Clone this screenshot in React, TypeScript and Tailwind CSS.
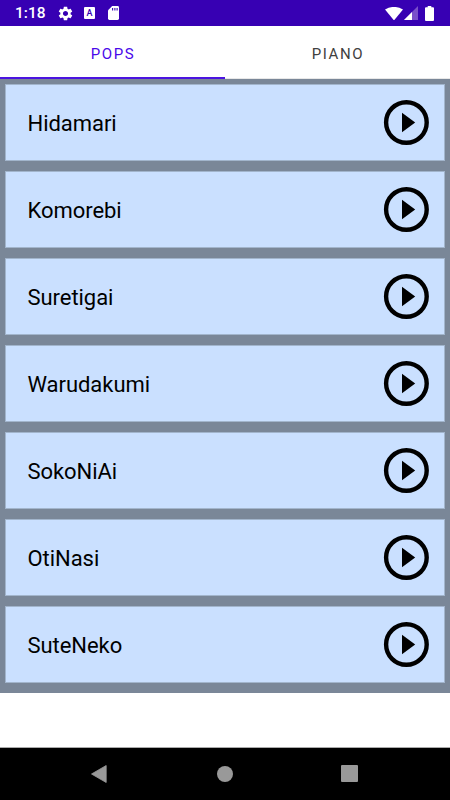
import React from "react";

const songs = ["Hidamari", "Komorebi", "Suretigai", "Warudakumi", "SokoNiAi", "OtiNasi", "SuteNeko"];

function StatusBar() {
  return (
    <header className="flex h-[26px] shrink-0 items-center bg-[#3700b3] pl-[15px] text-white">
      <span className="w-[43px] pt-[2px] text-[15.5px] leading-none font-medium">1:18</span>
      <svg className="mr-[11px] h-[15px] w-[15px]" viewBox="1.5 1.5 21 21" fill="currentColor">
        <path d="M19.14 12.94c.04-.3.06-.61.06-.94 0-.32-.02-.64-.07-.94l2.03-1.58c.18-.14.23-.41.12-.61l-1.92-3.32c-.12-.22-.37-.29-.59-.22l-2.39.96c-.5-.38-1.03-.7-1.62-.94l-.36-2.54c-.04-.24-.24-.41-.48-.41h-3.84c-.24 0-.43.17-.47.41l-.36 2.54c-.59.24-1.13.57-1.62.94l-2.39-.96c-.22-.08-.47 0-.59.22L2.74 8.87c-.12.21-.08.47.12.61l2.03 1.58c-.05.3-.09.63-.09.94s.02.64.07.94l-2.03 1.58c-.18.14-.23.41-.12.61l1.92 3.32c.12.22.37.29.59.22l2.39-.96c.5.38 1.03.7 1.62.94l.36 2.54c.05.24.24.41.48.41h3.84c.24 0 .44-.17.47-.41l.36-2.54c.59-.24 1.13-.56 1.62-.94l2.39.96c.22.08.47 0 .59-.22l1.92-3.32c.12-.22.07-.47-.12-.61l-2.01-1.58zM12 15.6c-1.98 0-3.6-1.62-3.6-3.6s1.62-3.6 3.6-3.6 3.6 1.62 3.6 3.6-1.62 3.6-3.6 3.6z" />
      </svg>
      <span className="mr-[13px] flex h-[12px] w-[11px] items-center justify-center rounded-[1px] bg-white text-[9px] leading-none font-medium text-[#3700b3]">A</span>
      <svg className="h-[14px] w-[11px]" viewBox="0 0 11 14">
        <path d="M4.2 0H9.6Q11 0 11 1.4V12.6Q11 14 9.6 14H1.4Q0 14 0 12.6V4.2Z" fill="white" />
        <path d="M4.6 2v2.4M6.9 2v2.4M9.1 2v2.4" stroke="#3700b3" strokeWidth="1.1" />
      </svg>
      <svg className="ml-auto h-[13px] w-[18px]" viewBox="0 0 18 13">
        <path d="M0 2.6Q9-2.8 18 2.6L9 13.4Z" fill="white" />
      </svg>
      <svg className="ml-[1px] h-[14px] w-[14px]" viewBox="0 0 14 14">
        <path d="M0 14L14 0V14Z" fill="#7a4fca" />
        <path d="M0 14L8 6V14Z" fill="white" />
      </svg>
      <svg className="mr-[16px] ml-[7px] h-[15px] w-[9px]" viewBox="0 0 9 15">
        <path d="M2.7 0H6.3V1.3H8Q9 1.3 9 2.3V14Q9 15 8 15H1Q0 15 0 14V2.3Q0 1.3 1 1.3H2.7Z" fill="white" />
      </svg>
    </header>
  );
}

function Tabs() {
  return (
    <nav className="grid h-[53px] shrink-0 grid-cols-2 bg-white text-[15px] leading-none tracking-[1.6px]">
      <button className="border-b-2 border-[#4b14e0] pt-[5px] pl-[1px] text-[#4a08ea]">POPS</button>
      <button className="border-b border-[#e8e8e8] pt-[4px] pl-[1px] text-[#404040]">PIANO</button>
    </nav>
  );
}

function SongRow({ title }: { title: string }) {
  return (
    <li className="flex h-[77px] items-center justify-between border border-[#a2b5cc] bg-[#cae0ff] pr-[15px] pl-[21.5px]">
      <span className="pt-[2px] text-[22px] leading-none tracking-[-0.05px] text-black">{title}</span>
      <button aria-label={`Play ${title}`}>
        <svg className="block h-[46px] w-[46px]" viewBox="0 0 46 46">
          <circle cx="23.4" cy="22.5" r="20.3" fill="none" stroke="black" strokeWidth="4.4" />
          <path d="M19 12.7V32.3L32.2 22.5Z" fill="black" />
        </svg>
      </button>
    </li>
  );
}

export default function App() {
  return (
    <div className="flex h-[800px] w-[450px] flex-col overflow-hidden bg-white font-[Roboto,sans-serif]">
      <StatusBar />
      <Tabs />
      <ul className="flex h-[614px] shrink-0 flex-col gap-[10px] bg-[#7a8798] px-[5px] pt-[5px]">
        {songs.map((title) => (
          <SongRow key={title} title={title} />
        ))}
      </ul>
      <footer className="mt-auto flex h-[53px] items-center justify-between border-t border-[#aaaaaa] bg-black pr-[92px] pb-px pl-[91px]">
        <svg className="h-[18px] w-[16px]" viewBox="0 0 16 18">
          <path d="M15.2 .5V17.5L.5 9Z" fill="#999" stroke="#999" strokeWidth=".8" strokeLinejoin="round" />
        </svg>
        <span className="ml-px h-4 w-4 rounded-full bg-[#999999]" />
        <span className="h-[17px] w-[17px] rounded-[1px] bg-[#999999]" />
      </footer>
    </div>
  );
}
